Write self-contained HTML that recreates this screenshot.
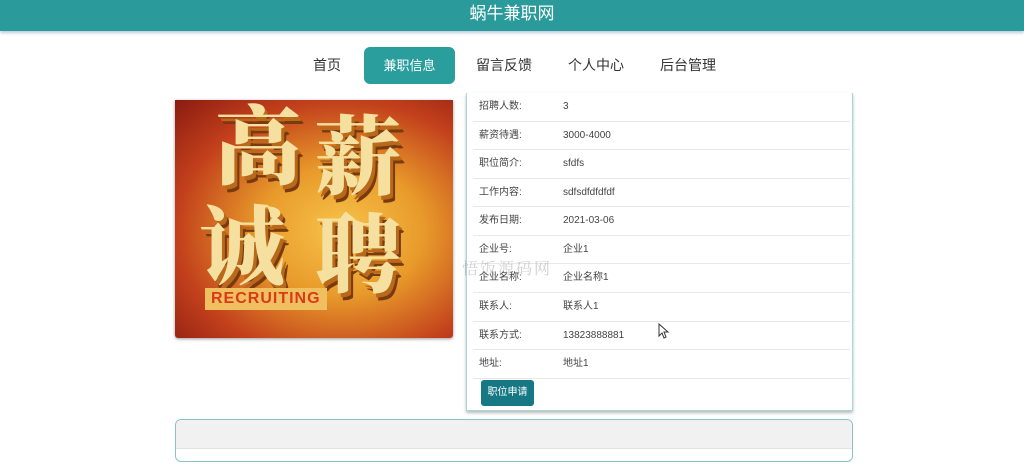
<!DOCTYPE html>
<html><head><meta charset="utf-8"><style>
*{margin:0;padding:0;box-sizing:border-box}
body{width:1024px;height:469px;overflow:hidden;background:#fff;font-family:"Liberation Sans","Noto Sans CJK SC",sans-serif;position:relative}
.hd{position:absolute;left:0;top:0;width:1024px;height:31px;background:#2a9a9a;color:#fff;font-size:17px;text-align:center;line-height:28px;box-shadow:0 2px 3px #bcd}
.nav{position:absolute;top:47px;height:37px;font-size:14px;color:#333;line-height:37px}
.nav span{position:absolute;white-space:nowrap}
.act{position:absolute;left:364px;top:47px;width:91px;height:37px;background:#2a9d9d;border-radius:6px;color:#fff;font-size:13px;text-align:center;line-height:37px}
.img{position:absolute;left:175px;top:100px;width:278px;height:238px;overflow:hidden;border-radius:0 0 3px 3px;box-shadow:0 1px 3px #999;
background:radial-gradient(ellipse at 60% 55%,#f7c44a 0%,#e89a2a 35%,#c2401c 70%,#8a1a10 100%)}
.img .t{position:absolute;font-family:"Noto Serif CJK SC",serif;font-weight:900;color:#f6e0a0;text-shadow:3px 4px 0 #b86a1a,5px 7px 0 #7a3a10}
.rec{position:absolute;left:30px;top:188px;font:bold 16px "Liberation Sans",sans-serif;color:#d83a1a;background:#f0c060;padding:2px 6px;letter-spacing:1px}
.pn{position:absolute;left:466px;top:93px;width:387px;height:318px;border:1px solid #a9d6d6;border-top:none;box-shadow:0 2px 3px #bbb;background:#fff}
.row{position:absolute;left:6px;width:377px;height:28.5px;border-bottom:1px solid #e8e8e8;font-size:10px;color:#444;line-height:28px}
.row b{font-weight:normal;position:absolute;left:6px}
.row i{font-style:normal;position:absolute;left:90px}
.btn{position:absolute;left:481px;top:380px;width:53px;height:26px;background:#177885;border-radius:3px;color:#fff;font-size:10px;text-align:center;line-height:26px}
.bx{position:absolute;left:175px;top:419px;width:678px;height:43px;border:1px solid #88c4c4;border-radius:6px;overflow:hidden}
.bx div{height:29px;background:#f1f1f1;border-bottom:1px solid #e2e2e2}
.wm{position:absolute;left:462px;top:256px;font-family:"Noto Serif CJK SC",serif;font-size:16px;color:rgba(120,120,120,.35);letter-spacing:2px}
</style></head><body>
<div class="hd">蜗牛兼职网</div>
<div class="nav"><span style="left:313px">首页</span><span style="left:476px">留言反馈</span><span style="left:568px">个人中心</span><span style="left:660px">后台管理</span></div>
<div class="act">兼职信息</div>
<div class="img">
<div class="t" style="left:40px;top:-22px;font-size:86px">高</div>
<div class="t" style="left:140px;top:-12px;font-size:86px">薪</div>
<div class="t" style="left:24px;top:78px;font-size:86px">诚</div>
<div class="t" style="left:140px;top:86px;font-size:86px">聘</div>
<div class="rec">RECRUITING</div>
</div>
<div class="pn">
<div class="row" style="top:0"><b>招聘人数:</b><i>3</i></div>
<div class="row" style="top:28.5px"><b>薪资待遇:</b><i>3000-4000</i></div>
<div class="row" style="top:57px"><b>职位简介:</b><i>sfdfs</i></div>
<div class="row" style="top:85.5px"><b>工作内容:</b><i>sdfsdfdfdfdf</i></div>
<div class="row" style="top:114px"><b>发布日期:</b><i>2021-03-06</i></div>
<div class="row" style="top:142.5px"><b>企业号:</b><i>企业1</i></div>
<div class="row" style="top:171px;height:29px"><b>企业名称:</b><i>企业名称1</i></div>
<div class="row" style="top:200px"><b>联系人:</b><i>联系人1</i></div>
<div class="row" style="top:228.5px"><b>联系方式:</b><i>13823888881</i></div>
<div class="row" style="top:257px"><b>地址:</b><i>地址1</i></div>
</div>
<div class="wm">悟饭源码网</div>
<div class="btn">职位申请</div>
<div class="bx"><div></div></div>
<svg style="position:absolute;left:658px;top:323px" width="12" height="16" viewBox="0 0 12 16"><path d="M1 1 L1 13 L4 10 L6 15 L8 14 L6 9 L10 9 Z" fill="#fff" stroke="#333" stroke-width="1"/></svg>
</body></html>
